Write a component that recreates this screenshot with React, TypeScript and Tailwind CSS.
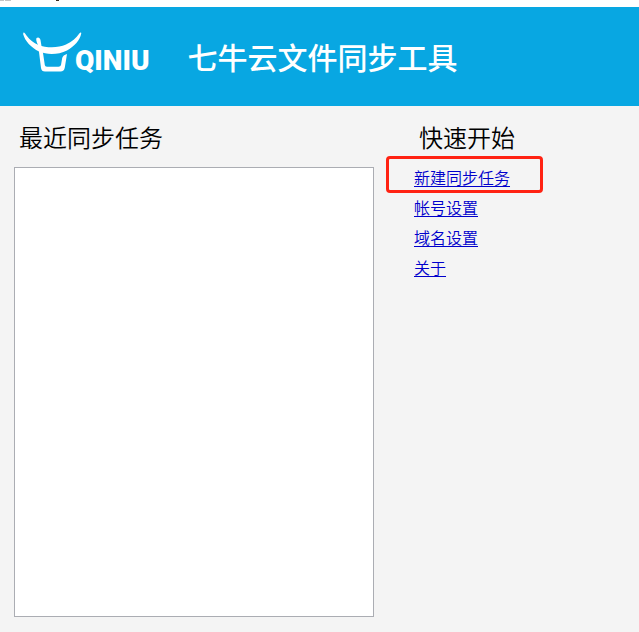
import clsx from "clsx";

const links = [
	{ label: "新建同步任务", href: "#new-task", highlighted: true },
	{ label: "帐号设置", href: "#account", highlighted: false },
	{ label: "域名设置", href: "#domain", highlighted: false },
	{ label: "关于", href: "#about", highlighted: false },
];

const Logo: React.FC = () => {
	return (
		<div className="flex items-center">
			<svg
				width="60"
				height="42"
				viewBox="0 0 60 42"
				fill="#fff"
				aria-hidden="true"
			>
				{/* horns */}
				<path d="M.5 .5C1.500 .3 2.500 2 3.500 3.500C7 8.500 11 11 15 12.700C24 16.300 35 16 43 12.500C49 9.800 53 6 56.500 1.200C57.500 0 58.500 .3 58.200 1.800C57 8 52 14 44 18.500C35 23 24 23 16 19.500C8 15.500 2 9 .1 2Z" />
				{/* head */}
				<path d="M13.500 6C15 4.800 17 5.500 17.500 8L18.500 14L20 21L21.800 33Q22 34.800 24 34.800H35.500Q37.500 34.800 38 33L39.200 26Q40 23 44 22L41.800 35.500Q41.200 39.500 37.500 39.500H22Q18.500 39.500 18 36L16 20L15 13Q12.500 8 13.500 6Z" />
			</svg>
			<span className="-ml-2 mt-4 font-['Roboto','Liberation_Sans',sans-serif] text-[28px] leading-8 font-black">
				QINIU
			</span>
		</div>
	);
};

const Header: React.FC = () => {
	return (
		<header className="flex h-[99px] items-center gap-[38px] bg-[#08a7e2] pr-4 pb-2 pl-[23px] text-white">
			<Logo />
			<h1 className="mt-1.5 text-[30px] leading-10 font-medium whitespace-nowrap">
				七牛云文件同步工具
			</h1>
		</header>
	);
};

const QuickStart: React.FC = () => {
	return (
		<aside className="w-[239px] shrink-0">
			<h2 className="pl-[33px] text-2xl leading-9">快速开始</h2>
			<ul className="mt-[7px]">
				{links.map((link) => (
					<li
						key={link.href}
						className="relative flex h-[30px] items-center pl-7"
					>
						{link.highlighted && (
							<span className="pointer-events-none absolute top-[-6px] left-0 h-[37px] w-[157px] rounded-[4px] border-3 border-[#ff2212]" />
						)}
						<a
							href={link.href}
							className={clsx(
								"text-base leading-6 text-[#0000cc] underline underline-offset-2",
								link.highlighted && "relative"
							)}
						>
							{link.label}
						</a>
					</li>
				))}
			</ul>
		</aside>
	);
};

const App: React.FC = () => {
	return (
		<div className="flex min-h-screen flex-col bg-[#f4f4f4] font-['Noto_Sans_CJK_SC',sans-serif] font-[350] text-black">
			<div className="flex h-[7px] items-start bg-white">
				<span className="h-px w-1 bg-[#c4c4c4]" />
				<span className="ml-px h-px w-1.5 bg-[#c4c4c4]" />
				<span className="ml-[45px] h-px w-[3px] bg-[#3a2c20]" />
			</div>
			<Header />
			<main className="flex flex-1 gap-3 px-[14px] pt-[13px] pb-[15px]">
				<section className="flex min-w-0 flex-1 flex-col">
					<h2 className="pl-[5px] text-2xl leading-9">最近同步任务</h2>
					<div className="mt-3 min-h-40 flex-1 border border-[#abadb3] bg-white" />
				</section>
				<QuickStart />
			</main>
		</div>
	);
};

export default App;
